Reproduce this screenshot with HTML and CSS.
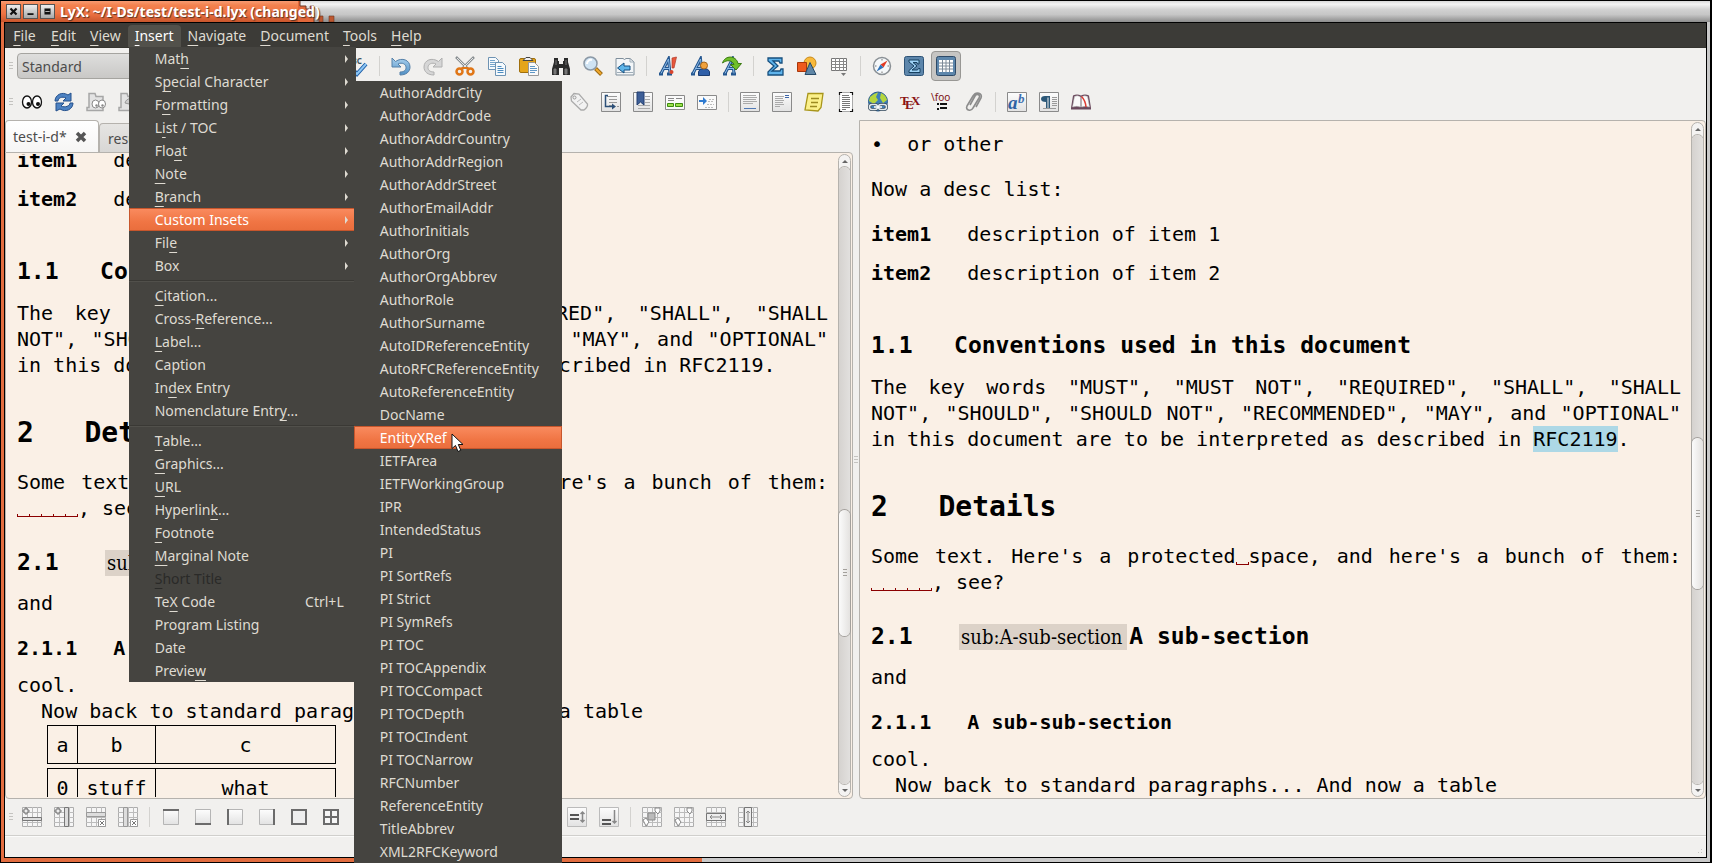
FILE: index.html
```html
<!DOCTYPE html>
<html lang="en">
<head>
<meta charset="utf-8">
<title>LyX: ~/I-Ds/test/test-i-d.lyx (changed)</title>
<link rel="stylesheet" href="styles.css">
</head>
<body>
<svg class="defs" aria-hidden="true">
  <defs>
    <linearGradient id="gBlue" x1="0" y1="0" x2="0" y2="1"><stop offset="0" stop-color="#a9d0ee"/><stop offset="1" stop-color="#4f8fc4"/></linearGradient>
    <linearGradient id="gPaper" x1="0" y1="0" x2="0" y2="1"><stop offset="0" stop-color="#fdfdfd"/><stop offset="1" stop-color="#e2e2e2"/></linearGradient>
    <symbol id="grid" viewBox="0 0 20 20"><path d="M.5.5h19v19H.5z" fill="#f6f6f6" stroke="#adadad"/><path d="M5.5 0v20M10.5 0v20M15.5 0v20M0 5.500h20M0 10.500h20M0 15.500h20" stroke="#bcbcbc" fill="none"/></symbol>
    <symbol id="plus" viewBox="0 0 8 8"><path d="M3 1h2v2h2v2H5v2H3V5H1V3h2z" fill="#eee" stroke="#777"/></symbol>
    <symbol id="cross" viewBox="0 0 8 8"><path d="M.5.5h7v7h-7z" fill="#fff" stroke="#999"/><path d="M2 2l4 4M6 2L2 6" stroke="#777"/></symbol>
    <symbol id="letterA" viewBox="0 0 20 20"><path d="M1 18h4M9 18h5M3 17.500L10.500 3l1.500 14.500M5.500 12.500h6.500" fill="none" stroke="#24568f" stroke-width="3"/><path d="M3 17.500L10.500 3l1.500 14.500M5.500 12.500h6.500" fill="none" stroke="#8ab9e6" stroke-width="1"/></symbol>
    <symbol id="curl" viewBox="0 0 20 20"><path d="M1 2v9h9L7 8c4-2 8 0 8 3.500S12 16 9 16v3c6 0 10-3 10-8C19 4 11 1 4.500 5.500z"/></symbol>
    <symbol id="sheet" viewBox="0 0 20 20"><path d="M.5.500h19v19H.5z" fill="url(#gPaper)" stroke="#8a8a8a"/></symbol>
    <symbol id="cell" viewBox="0 0 16 16"><path d="M.5.500h15v15H.5z" fill="url(#gPaper)" stroke="#b5b5b5"/></symbol>
  </defs>
</svg>

<div class="window">
  <header class="titlebar">
    <div class="titlebar__active">
      <button class="wm" aria-label="Close window"><svg viewBox="0 0 15 15"><path d="M4 4l7 7M11 4l-7 7" stroke="#111" stroke-width="2.500"/></svg></button>
      <button class="wm" aria-label="Minimize window"><svg viewBox="0 0 15 15"><path d="M4 10.500h7" stroke="#111" stroke-width="2"/></svg></button>
      <button class="wm" aria-label="Maximize window"><svg viewBox="0 0 15 15"><path d="M4 4h7v7H4z" fill="#111"/><path d="M5 7.500h5" stroke="#ccc" stroke-width="1"/></svg></button>
      <h1 class="titlebar__text">LyX: ~/I-Ds/test/test-i-d.lyx (changed)</h1>
    </div>
    <svg class="titlebar__edge" viewBox="0 0 38 21" aria-hidden="true"><path d="M0 0h2v5h6v3h3v4h5v9H0z" fill="#e2683a"/><path d="M2 0v5h6v3h3v4h5v9" fill="none" stroke="#6b3a26"/><path d="M12 5h4v3h-4zM21 15h4v6h-4zM31 15h5v6h-5z" fill="#bd5730" stroke="#6b3a26" stroke-width=".6"/></svg>
  </header>

  <div class="client">
    <nav class="menubar" aria-label="Main menu">
      <div class="menubar__item"><button><u>F</u>ile</button></div>
      <div class="menubar__item"><button><u>E</u>dit</button></div>
      <div class="menubar__item"><button><u>V</u>iew</button></div>
      <div class="menubar__item menubar__item--open">
        <button aria-haspopup="true" aria-expanded="true"><u>I</u>nsert</button>
        <div class="menu" role="menu">
          <button class="menu__row menu__row--more" role="menuitem">Mat<u>h</u></button>
          <button class="menu__row menu__row--more" role="menuitem">S<u>p</u>ecial Character</button>
          <button class="menu__row menu__row--more" role="menuitem">F<u>o</u>rmatting</button>
          <button class="menu__row menu__row--more" role="menuitem">L<u>i</u>st / TOC</button>
          <button class="menu__row menu__row--more" role="menuitem">Flo<u>a</u>t</button>
          <button class="menu__row menu__row--more" role="menuitem"><u>N</u>ote</button>
          <button class="menu__row menu__row--more" role="menuitem"><u>B</u>ranch</button>
          <button class="menu__row menu__row--more menu__row--active" role="menuitem">Custom Insets</button>
          <button class="menu__row menu__row--more" role="menuitem">Fil<u>e</u></button>
          <button class="menu__row menu__row--more" role="menuitem">Box</button>
          <hr class="menu__rule">
          <button class="menu__row" role="menuitem"><u>C</u>itation...</button>
          <button class="menu__row" role="menuitem">Cross-<u>R</u>eference...</button>
          <button class="menu__row" role="menuitem"><u>L</u>abel...</button>
          <button class="menu__row" role="menuitem">Caption</button>
          <button class="menu__row" role="menuitem">In<u>d</u>ex Entry</button>
          <button class="menu__row" role="menuitem">Nomenclature Entr<u>y</u>...</button>
          <hr class="menu__rule">
          <button class="menu__row" role="menuitem"><u>T</u>able...</button>
          <button class="menu__row" role="menuitem"><u>G</u>raphics...</button>
          <button class="menu__row" role="menuitem"><u>U</u>RL</button>
          <button class="menu__row" role="menuitem">Hyperlin<u>k</u>...</button>
          <button class="menu__row" role="menuitem"><u>F</u>ootnote</button>
          <button class="menu__row" role="menuitem"><u>M</u>arginal Note</button>
          <button class="menu__row" role="menuitem" disabled><u>S</u>hort Title</button>
          <button class="menu__row" role="menuitem">Te<u>X</u> Code<kbd>Ctrl+L</kbd></button>
          <button class="menu__row" role="menuitem">Program Listing</button>
          <button class="menu__row" role="menuitem">Date</button>
          <button class="menu__row" role="menuitem">Previe<u>w</u></button>
          <div class="menu menu--sub" role="menu">
            <button class="menu__row" role="menuitem">AuthorAddrCity</button>
            <button class="menu__row" role="menuitem">AuthorAddrCode</button>
            <button class="menu__row" role="menuitem">AuthorAddrCountry</button>
            <button class="menu__row" role="menuitem">AuthorAddrRegion</button>
            <button class="menu__row" role="menuitem">AuthorAddrStreet</button>
            <button class="menu__row" role="menuitem">AuthorEmailAddr</button>
            <button class="menu__row" role="menuitem">AuthorInitials</button>
            <button class="menu__row" role="menuitem">AuthorOrg</button>
            <button class="menu__row" role="menuitem">AuthorOrgAbbrev</button>
            <button class="menu__row" role="menuitem">AuthorRole</button>
            <button class="menu__row" role="menuitem">AuthorSurname</button>
            <button class="menu__row" role="menuitem">AutoIDReferenceEntity</button>
            <button class="menu__row" role="menuitem">AutoRFCReferenceEntity</button>
            <button class="menu__row" role="menuitem">AutoReferenceEntity</button>
            <button class="menu__row" role="menuitem">DocName</button>
            <button class="menu__row menu__row--active" role="menuitem">EntityXRef<svg class="pointer" viewBox="0 0 14 20" aria-hidden="true"><path d="M1 1v14.500l3.500-3L7 18.500l2.800-1.200L7.300 11.500H12z" fill="#fff" stroke="#111"/></svg></button>
            <button class="menu__row" role="menuitem">IETFArea</button>
            <button class="menu__row" role="menuitem">IETFWorkingGroup</button>
            <button class="menu__row" role="menuitem">IPR</button>
            <button class="menu__row" role="menuitem">IntendedStatus</button>
            <button class="menu__row" role="menuitem">PI</button>
            <button class="menu__row" role="menuitem">PI SortRefs</button>
            <button class="menu__row" role="menuitem">PI Strict</button>
            <button class="menu__row" role="menuitem">PI SymRefs</button>
            <button class="menu__row" role="menuitem">PI TOC</button>
            <button class="menu__row" role="menuitem">PI TOCAppendix</button>
            <button class="menu__row" role="menuitem">PI TOCCompact</button>
            <button class="menu__row" role="menuitem">PI TOCDepth</button>
            <button class="menu__row" role="menuitem">PI TOCIndent</button>
            <button class="menu__row" role="menuitem">PI TOCNarrow</button>
            <button class="menu__row" role="menuitem">RFCNumber</button>
            <button class="menu__row" role="menuitem">ReferenceEntity</button>
            <button class="menu__row" role="menuitem">TitleAbbrev</button>
            <button class="menu__row" role="menuitem">XML2RFCKeyword</button>
          </div>
        </div>
      </div>
      <div class="menubar__item"><button><u>N</u>avigate</button></div>
      <div class="menubar__item"><button><u>D</u>ocument</button></div>
      <div class="menubar__item"><button><u>T</u>ools</button></div>
      <div class="menubar__item"><button><u>H</u>elp</button></div>
    </nav>

    <div class="toolbar" role="toolbar" aria-label="Standard">
      <span class="grip"></span>
      <select class="style-select" aria-label="Paragraph style"><option>Standard</option></select>
      <button class="tool" aria-label="Spellcheck"><svg viewBox="0 0 20 20"><text x="-2" y="8" class="t-abc">ABC</text><path d="M4 13l5 5 9-10" fill="none" stroke="#1f5fa8" stroke-width="4"/><path d="M4 13l5 5 9-10" fill="none" stroke="#8cc6f4" stroke-width="2"/></svg></button>
      <span class="divider"></span>
      <button class="tool" aria-label="Undo"><svg viewBox="0 0 20 20"><use href="#curl" fill="url(#gBlue)" stroke="#5580a8"/></svg></button>
      <button class="tool" aria-label="Redo"><svg viewBox="0 0 20 20"><g transform="matrix(-1 0 0 1 20 0)"><use href="#curl" fill="#d6d6d6" stroke="#b0b0b0"/></g></svg></button>
      <button class="tool" aria-label="Cut"><svg viewBox="0 0 20 20"><path d="M1 1l12 12M19 1L7 13" stroke="#8a8f92" stroke-width="2.500"/><path d="M2 2l10 10M18 2L8 12" stroke="#e4e6e6"/><path d="M7 11h6l2 2H5z" fill="#e07616"/><circle cx="4.500" cy="15.500" r="3" fill="none" stroke="#e07616" stroke-width="2.500"/><circle cx="15.500" cy="15.500" r="3" fill="none" stroke="#e07616" stroke-width="2.500"/></svg></button>
      <button class="tool" aria-label="Copy"><svg viewBox="0 0 20 20"><path d="M1.500 1.500h7l3 3v9h-10z" fill="#f6fafd" stroke="#6e93b3"/><path d="M3 4.500h5M3 6.500h7M3 8.500h6M3 10.500h6" stroke="#76a5cc"/><path d="M8.500 6.500h7l3 3v10h-10z" fill="#f6fafd" stroke="#6e93b3"/><path d="M10.500 10.500h4M10.500 12.500h6M10.500 14.500h6M10.500 16.500h6" stroke="#4c8cc0"/></svg></button>
      <button class="tool" aria-label="Paste"><svg viewBox="0 0 20 20"><rect x=".5" y="2.500" width="16" height="14" rx="1.500" fill="#e5a51b" stroke="#a06f0c"/><path d="M4 4.500l3-3h4l3 3z" fill="#eee" stroke="#444"/><path d="M9.500 6.500h6l4 4v9h-10z" fill="#fafafa" stroke="#999"/><path d="M11 10.500h5M11 12.500h7M11 14.500h7M11 16.500h5" stroke="#5f97c6"/></svg></button>
      <button class="tool" aria-label="Find and replace"><svg viewBox="0 0 20 20"><path d="M3 2h4v3h1v3h4V5h1V2h4v4l2 7v6h-7v-7H8v7H1v-6l2-7z" fill="#2b2b2b"/><path d="M3 13h2v5H3zM14 13h2v5h-2zM5 4v5M15 4v5" fill="#777" stroke="#777"/></svg></button>
      <button class="tool" aria-label="Find"><svg viewBox="0 0 20 20"><path d="M12.500 12.500l6 6" stroke="#9c6a14" stroke-width="4"/><path d="M13 13l5 5" stroke="#f2a92c" stroke-width="2"/><circle cx="7.500" cy="7.500" r="6.500" fill="#cfe3f3" stroke="#8b98a5" stroke-width="1.500"/><path d="M4 8a4 4 0 0 1 5-4" fill="none" stroke="#fff" stroke-width="2"/></svg></button>
      <button class="tool" aria-label="Navigate back"><svg viewBox="0 0 20 20"><path d="M1 2.500h7l1.500 1 1.500-1h4l4 3.500v13H1z" fill="#f3f6f8" stroke="#7f8e9b"/><path d="M2 16.500h16M15 2.500V6h4" fill="none" stroke="#9fadb8"/><path d="M9 7l-6.500 5L9 17v-3h6v-4H9z" fill="#5db5ea" stroke="#174f80"/></svg></button>
      <span class="divider"></span>
      <button class="tool" aria-label="Toggle emphasis"><svg viewBox="0 0 20 20"><use href="#letterA" width="20" height="20"/><path d="M14 2l4.500-1-2.500 11h-2z" fill="#e8573c" stroke="#b23a28" stroke-width=".7"/><circle cx="13.500" cy="16" r="2" fill="#d9442c"/></svg></button>
      <button class="tool" aria-label="Toggle noun"><svg viewBox="0 0 20 20"><use href="#letterA" width="20" height="20"/><path d="M8.500 19.500v-4q1-3 5.500-3t5.500 3v4z" fill="#2f5fa8" stroke="#1c3d70"/><circle cx="14" cy="9.500" r="3.500" fill="#f0a13c" stroke="#a5641a"/></svg></button>
      <button class="tool" aria-label="Apply last text style"><svg viewBox="0 0 20 20"><use href="#letterA" width="20" height="20"/><path d="M.5 7C3-1 14-1 16 7.500h3.500L14 14 8.500 8.500H12C10 4 5 3.500.5 7z" fill="#6fbf2a" stroke="#3b7a12"/></svg></button>
      <span class="divider"></span>
      <button class="tool" aria-label="Insert math"><svg viewBox="0 0 20 20"><path d="M3 2h14v5h-2l-1-2H8l5 5-6 5h8l1-2h2v6H3v-3l6-6-6-5z" fill="#5fb4ec" stroke="#174f7e" stroke-width="1.300"/></svg></button>
      <button class="tool" aria-label="Insert graphics"><svg viewBox="0 0 20 20"><circle cx="13" cy="7" r="6" fill="#f8b93a" stroke="#c98a18"/><path d="M.5 6.500h9v9h-9z" fill="#ee5a1e" stroke="#a8360a"/><path d="M13 6.500l6 12H8z" fill="#5f86a6" stroke="#274a68"/></svg></button>
      <button class="tool" aria-label="Insert table"><svg viewBox="0 0 20 20"><path d="M2.500 2.500h15v12h-15z" fill="#fff" stroke="#777"/><path d="M6.500 2v13M10.500 2v13M14.500 2v13M2 5.500h16M2 8.500h16M2 11.500h16" stroke="#888"/><path d="M12 17h5l-2.500 3z" fill="#777"/></svg></button>
      <span class="divider"></span>
      <button class="tool" aria-label="Toggle outline"><svg viewBox="0 0 20 20"><circle cx="10" cy="10" r="8.500" fill="#f5f8fa" stroke="#8a9095" stroke-width="1.500"/><path d="M10 3v1.500M10 15.500V17M3 10h1.500M15.500 10H17" stroke="#777"/><path d="M15.500 4.500L8.500 8.500l3 3z" fill="#e23a24"/><path d="M4.500 15.500l4-7 3 3z" fill="#2d72bb"/></svg></button>
      <button class="tool" aria-label="Toggle math toolbar"><svg viewBox="0 0 20 20"><rect x=".5" y=".5" width="19" height="19" rx="2" fill="#5d86ab" stroke="#2e5376"/><path d="M5 4h10v4h-1.500l-.5-1.500H9l4 3.500-5 4h5.500l1-1.500H16v4H5v-2l5-4.500-5-4z" fill="#9fd3f6" stroke="#16405f"/></svg></button>
      <button class="tool tool--on" aria-label="Toggle table toolbar" aria-pressed="true"><svg viewBox="0 0 20 20"><rect x=".5" y=".5" width="19" height="19" rx="2" fill="#5d86ab" stroke="#2e4a68"/><path d="M3 4h14v12H3z" fill="#fff"/><path d="M6.500 4v12M10 4v12M13.500 4v12M3 7h14M3 10h14M3 13h14" stroke="#7c8a98"/></svg></button>
    </div>

    <div class="toolbar" role="toolbar" aria-label="View and insert">
      <span class="grip"></span>
      <div class="tool-group tool-group--first">
        <button class="tool" aria-label="View"><svg viewBox="0 0 20 20"><ellipse cx="5" cy="10" rx="4.500" ry="6" fill="#fff" stroke="#111" stroke-width="1.300"/><ellipse cx="15" cy="10" rx="4.500" ry="6" fill="#fff" stroke="#111" stroke-width="1.300"/><circle cx="6.500" cy="12" r="2" fill="#111"/><circle cx="16" cy="12" r="2" fill="#111"/></svg></button>
        <button class="tool" aria-label="Update"><svg viewBox="0 0 20 20"><path d="M1 9C1 3 8-1 14 3l3-2v8H9l3-3C8 4 4 6 4 9zM19 11c0 6-7 10-13 6l-4 2v-8h8l-3 3c4 2 9 0 9-3z" fill="#4d82c2" stroke="#24508c"/></svg></button>
        <button class="tool" aria-label="View master document"><svg viewBox="0 0 20 20"><path d="M3 1.500h6l1 3h7v14H1v-3h2z" fill="#e3e3e3" stroke="#a6a6a6" stroke-width="1.500"/><ellipse cx="9.500" cy="12" rx="3.500" ry="4" fill="#fff" stroke="#888"/><ellipse cx="16" cy="12" rx="3.500" ry="4" fill="#fff" stroke="#888"/><circle cx="10.500" cy="13.500" r="1.200" fill="#888"/><circle cx="16.500" cy="13.500" r="1.200" fill="#888"/></svg></button>
        <button class="tool" aria-label="Update master document"><svg viewBox="0 0 20 20"><path d="M3 1.500h6l1 3h7v14H1v-3h2z" fill="#e3e3e3" stroke="#a6a6a6" stroke-width="1.500"/><path d="M7 11c1-5 8-6 10-2l2-1v5h-5l2-2c-2-2-5-1-5 1z" fill="#ccc" stroke="#999"/></svg></button>
      </div>
      <div class="tool-group tool-group--insets">
        <button class="tool" aria-label="Insert label"><svg viewBox="0 0 20 20"><path d="M2 5l3-3.500 5 .5 8.500 10q.5 3-3.500 6h-3L2.500 9z" fill="#f2f2f2" stroke="#aaa" stroke-width="1.300"/><circle cx="5.500" cy="5.500" r="1.500" fill="none" stroke="#999"/><path d="M8 10l4-3M10 13l4-3" stroke="#bbb"/></svg></button>
        <button class="tool" aria-label="Insert cross-reference"><svg viewBox="0 0 20 20"><use href="#sheet"/><path d="M6 4.500h10M8 7.500h8M8 10.500h8M8 13.500h3M16 14.500h2" stroke="#999"/><path d="M7 3.500H4.500v11H12" fill="none" stroke="#2b4f78" stroke-width="1.500"/><path d="M11 11.500v6l4-3z" fill="#2b4f78"/></svg></button>
        <button class="tool" aria-label="Insert citation"><svg viewBox="0 0 20 20"><use href="#sheet"/><path d="M12 4.500h5M12 7.500h5M12 10.500h5M5 13.500h12M5 16.500h12" stroke="#aaa"/><path d="M4 0h7v13l-3.500-3L4 13z" fill="#3e5f97" stroke="#233f70"/></svg></button>
        <button class="tool" aria-label="Insert index entry"><svg viewBox="0 0 20 20"><path d="M.5 3.500h19v14H.5z" fill="#fafafa" stroke="#8a8a8a"/><path d="M3 6.500h6M11 6.500h6M3 8.500h6" stroke="#888"/><path d="M2.500 11.500h6v3h-6zM10.500 11.500h7v3h-7z" fill="#9ce04a" stroke="#3c8b10"/></svg></button>
        <button class="tool" aria-label="Insert nomenclature entry"><svg viewBox="0 0 20 20"><path d="M.5 3.500h19v14H.5z" fill="#fafafa" stroke="#8a8a8a"/><path d="M12 7.500h5M11 9.500h5M10 12.500h7M8 15.500h9" stroke="#bbb" stroke-dasharray="2 1"/><path d="M2 8h4V5l4 4-4 4v-3H2z" fill="#2f7bd0"/></svg></button>
        <span class="divider"></span>
        <button class="tool" aria-label="Insert footnote"><svg viewBox="0 0 20 20"><use href="#sheet"/><path d="M3 3.500h13M3 5.500h14M3 7.500h13M3 9.500h14M3 11.500h10" stroke="#aaa"/><path d="M4 16.500h12" stroke="#4f79b5"/></svg></button>
        <button class="tool" aria-label="Insert marginal note"><svg viewBox="0 0 20 20"><use href="#sheet"/><path d="M3 4.500h9M3 6.500h8M3 8.500h9M3 10.500h8M3 12.500h9M3 14.500h5" stroke="#aaa"/><path d="M13 3.500h4M13 5.500h4" stroke="#3e66a8"/></svg></button>
        <button class="tool" aria-label="Insert note"><svg viewBox="0 0 20 20"><path d="M4 1.500h15l-2 14-3 3.500L1 18z" fill="#fbf08a" stroke="#a8951a" stroke-width="1.300"/><path d="M7 6.500h8M7 10.500h7M6 14.500h7" stroke="#9c8a20" stroke-width="1.500"/></svg></button>
        <button class="tool" aria-label="Insert box"><svg viewBox="0 0 20 20"><path d="M3.500.5h13v19h-13z" fill="#fff" stroke="#aaa"/><path d="M3.500 3V.5H6M14 .5h2.500V3M3.500 17v2.500H6M14 19.500h2.500V17" fill="none" stroke="#111" stroke-width="1.200"/><path d="M6 3.500h7M6 5.500h8M6 7.500h8M6 9.500h8M6 11.500h8M6 13.500h8M6 15.500h8M6 17.500h4" stroke="#777"/></svg></button>
        <button class="tool" aria-label="Insert hyperlink"><svg viewBox="0 0 20 20"><circle cx="10" cy="9.500" r="9.500" fill="#3f7fb8" stroke="#285a8a"/><path d="M2 5q4-4 8-4.500l-2 4.500 2 3-4 4-5-3zM13 1q5 2 6 7l-4 3-3-5z" fill="#b5d63e"/><rect x="1.500" y="12.500" width="8" height="5" rx="2.500" fill="none" stroke="#33475a" stroke-width="3"/><rect x="10.500" y="12.500" width="8" height="5" rx="2.500" fill="none" stroke="#33475a" stroke-width="3"/><rect x="1.500" y="12.500" width="8" height="5" rx="2.500" fill="none" stroke="#e3eaee" stroke-width="1.500"/><rect x="10.500" y="12.500" width="8" height="5" rx="2.500" fill="none" stroke="#e3eaee" stroke-width="1.500"/><path d="M6 15h8" stroke="#fff" stroke-width="1.500"/></svg></button>
        <button class="tool" aria-label="Insert TeX code"><svg viewBox="0 0 20 20"><text x="0" y="13" class="t-tex">T</text><text x="5" y="17" class="t-tex">E</text><text x="11" y="13" class="t-tex">X</text></svg></button>
        <button class="tool" aria-label="Insert math macro"><svg viewBox="0 0 20 20"><text x="-1" y="9" class="t-foo">\foo</text><path d="M5 11h2v2H5zM5 16h2v2H5zM8 11h7v2H8zM8 15h7v2H8z" fill="#111"/></svg></button>
        <button class="tool" aria-label="Insert file"><svg viewBox="0 0 20 20"><path d="M6 13l5-9c2-3 6-1 4 2l-6 10c-2 4-8 2-6-2l6-10c3-5 10-3 8 2l-5 9" fill="none" stroke="#8c8c8c" stroke-width="1.600"/></svg></button>
        <span class="divider"></span>
        <button class="tool" aria-label="Text style"><svg viewBox="0 0 20 20"><use href="#sheet"/><text x="1" y="17" class="t-ab">a</text><text x="11" y="11" class="t-b">b</text></svg></button>
        <button class="tool" aria-label="Paragraph settings"><svg viewBox="0 0 20 20"><use href="#sheet"/><path d="M13 5.500h5M13 7.500h5M13 9.500h5M13 11.500h5M13 13.500h5M4 16.500h13" stroke="#999"/><path d="M11 4v12H9.500V5.500h-1V16H7v-6Q2 10 2 7t4-3z" fill="#2c5878"/></svg></button>
        <button class="tool" aria-label="Thesaurus"><svg viewBox="0 0 20 20"><path d="M0 16L2 3.500q4-2 8 0 4-2 8 0l2 12.500v1.500H0z" fill="#6b4a5e"/><path d="M1.500 15L3.500 4.500q3-1.500 6 .5v10Q6 13.500 1.500 15zM10.500 15V5q3-2 6-.5L18.500 15Q14 13.500 10.500 15z" fill="#fafafa" stroke="#bbb" stroke-width=".5"/><path d="M10.500 4.500q4 4 4.500 10.500" fill="none" stroke="#e03c34" stroke-width="1.500"/></svg></button>
      </div>
    </div>

    <main class="workarea">
      <section class="left">
        <div class="tabs" role="tablist">
          <div class="tab tab--current"><button role="tab" aria-selected="true">test-i-d*</button><button class="tab__close" aria-label="Close tab"><svg viewBox="0 0 12 12"><path d="M2 2l8 8M10 2l-8 8" stroke="#555" stroke-width="3.500"/></svg></button></div>
          <div class="tab"><button role="tab" aria-selected="false">resume</button></div>
        </div>
        <div class="frame frame--tabbed">
          <article class="doc doc--scrolled">
            <p class="entry"><b>item1</b>description of item 1</p>
            <p class="entry"><b>item2</b>description of item 2</p>
            <h3 class="sub sub--first"><span class="num">1.1</span>Conventions used in this document</h3>
            <p class="lines"><span>The key words "MUST", "MUST NOT", "REQUIRED", "SHALL", "SHALL</span><span>NOT", "SHOULD", "SHOULD NOT", "RECOMMENDED", "MAY", and "OPTIONAL"</span>in this document are to be interpreted as described in RFC2119.</p>
            <h2 class="section"><span class="num">2</span>Details</h2>
            <p class="lines"><span>Some text. Here's a protected<i class="nb nb--end"></i>space, and here's a bunch of them:</span><i class="nb"></i><i class="nb"></i><i class="nb"></i><i class="nb"></i><i class="nb nb--end"></i>, see?</p>
            <h3 class="sub"><span class="num">2.1</span><span class="label">sub:A-sub-section</span>A sub-section</h3>
            <p>and</p>
            <h4 class="subsub"><span class="num">2.1.1</span>A sub-sub-section</h4>
            <p>cool.</p>
            <p class="indent">Now back to standard paragraphs... And now a table</p>
            <table class="grid">
              <tr><td>a</td><td>b</td><td>c</td></tr>
              <tr><td>0</td><td>stuff</td><td>what</td></tr>
            </table>
          </article>
          <div class="scroll scroll--left" role="scrollbar" aria-label="Scroll source pane" aria-valuenow="55">
            <span class="scroll__arrow scroll__arrow--up"></span>
            <div class="scroll__track"><span class="scroll__thumb"></span></div>
            <span class="scroll__arrow scroll__arrow--down"></span>
          </div>
        </div>
      </section>
      <span class="splitter"></span>
      <section class="right frame">
        <article class="doc">
          <p class="bullet"><span>•</span>or other</p>
          <p class="spaced">Now a desc list:</p>
          <p class="entry spaced"><b>item1</b>description of item 1</p>
          <p class="entry"><b>item2</b>description of item 2</p>
          <h3 class="sub sub--first"><span class="num">1.1</span>Conventions used in this document</h3>
          <p class="lines"><span>The key words "MUST", "MUST NOT", "REQUIRED", "SHALL", "SHALL</span><span>NOT", "SHOULD", "SHOULD NOT", "RECOMMENDED", "MAY", and "OPTIONAL"</span>in this document are to be interpreted as described in <mark>RFC2119</mark>.</p>
          <h2 class="section"><span class="num">2</span>Details</h2>
          <p class="lines"><span>Some text. Here's a protected<i class="nb nb--end"></i>space, and here's a bunch of them:</span><i class="nb"></i><i class="nb"></i><i class="nb"></i><i class="nb"></i><i class="nb nb--end"></i>, see?</p>
          <h3 class="sub"><span class="num">2.1</span><span class="label">sub:A-sub-section</span>A sub-section</h3>
          <p>and</p>
          <h4 class="subsub"><span class="num">2.1.1</span>A sub-sub-section</h4>
          <p>cool.</p>
          <p class="indent">Now back to standard paragraphs... And now a table</p>
        </article>
        <div class="scroll scroll--right" role="scrollbar" aria-label="Scroll second pane" aria-valuenow="50">
          <span class="scroll__arrow scroll__arrow--up"></span>
          <div class="scroll__track"><span class="scroll__thumb"></span></div>
          <span class="scroll__arrow scroll__arrow--down"></span>
        </div>
      </section>
    </main>

    <div class="toolbar toolbar--table" role="toolbar" aria-label="Table">
      <span class="grip"></span>
      <div class="tool-group tool-group--first">
        <button class="tool" aria-label="Add row"><svg viewBox="0 0 20 20"><use href="#grid"/><path d="M.5 10.500h19v3H.5z" fill="#ddd" stroke="#777"/><use href="#plus" width="8" height="8"/></svg></button>
        <button class="tool" aria-label="Add column"><svg viewBox="0 0 20 20"><use href="#grid"/><path d="M10.500.5h4v19h-4z" fill="#ddd" stroke="#777"/><use href="#plus" width="8" height="8"/></svg></button>
        <button class="tool" aria-label="Delete row"><svg viewBox="0 0 20 20"><use href="#grid"/><path d="M.5 5.500h19v4H.5z" fill="#ddd" stroke="#999"/><use href="#cross" x="12" y="12" width="8" height="8"/></svg></button>
        <button class="tool" aria-label="Delete column"><svg viewBox="0 0 20 20"><use href="#grid"/><path d="M5.500.5h4v19h-4z" fill="#ddd" stroke="#999"/><use href="#cross" x="12" y="12" width="8" height="8"/></svg></button>
        <span class="divider"></span>
        <button class="tool" aria-label="Set top line"><svg viewBox="-2 -2 20 20"><use href="#cell" width="16" height="16"/><path d="M0 1h16" stroke="#6b6b6b" stroke-width="2"/></svg></button>
        <button class="tool" aria-label="Set bottom line"><svg viewBox="-2 -2 20 20"><use href="#cell" width="16" height="16"/><path d="M0 15h16" stroke="#6b6b6b" stroke-width="2"/></svg></button>
        <button class="tool" aria-label="Set left line"><svg viewBox="-2 -2 20 20"><use href="#cell" width="16" height="16"/><path d="M1 0v16" stroke="#6b6b6b" stroke-width="2"/></svg></button>
        <button class="tool" aria-label="Set right line"><svg viewBox="-2 -2 20 20"><use href="#cell" width="16" height="16"/><path d="M15 0v16" stroke="#6b6b6b" stroke-width="2"/></svg></button>
        <button class="tool" aria-label="Set border lines"><svg viewBox="-2 -2 20 20"><path d="M1 1h14v14H1z" fill="#eee" stroke="#6b6b6b" stroke-width="2"/></svg></button>
        <button class="tool" aria-label="Set all lines"><svg viewBox="-2 -2 20 20"><path d="M1 1h14v14H1zM8 0v16M0 8h16" fill="#f6f6f6" stroke="#6b6b6b" stroke-width="2"/></svg></button>
      </div>
      <div class="tool-group tool-group--cells">
        <button class="tool" aria-label="Align middle"><svg viewBox="0 0 20 20"><path d="M.5.500h19v19H.5z" fill="url(#gPaper)" stroke="#bbb"/><path d="M3 8h9M3 12h9" stroke="#555" stroke-width="2"/><path d="M15.500 5v10M13.500 7l2-2 2 2M13.500 13l2 2 2-2" fill="none" stroke="#888" stroke-width="1.500"/></svg></button>
        <button class="tool" aria-label="Align bottom"><svg viewBox="0 0 20 20"><path d="M.5.500h19v19H.5z" fill="url(#gPaper)" stroke="#bbb"/><path d="M3 13h9M3 17h9" stroke="#555" stroke-width="2"/><path d="M15.500 3v13M13.500 14l2 2 2-2" fill="none" stroke="#888" stroke-width="1.500"/></svg></button>
        <span class="divider"></span>
        <button class="tool" aria-label="Rotate cell"><svg viewBox="0 0 20 20"><use href="#grid"/><path d="M6 6h7v7H6z" fill="#bbb" stroke="#888"/><path d="M1 13l3-2 3 4-3 4zM13 1h5v3l-2 3-3-3z" fill="#fff" stroke="#888"/></svg></button>
        <button class="tool" aria-label="Rotate table"><svg viewBox="0 0 20 20"><use href="#grid"/><path d="M1 13l3-2 3 4-3 4zM13 1h5v3l-2 3-3-3z" fill="#fff" stroke="#888"/></svg></button>
        <button class="tool" aria-label="Merge columns"><svg viewBox="0 0 20 20"><use href="#grid"/><path d="M.5 6.500h19v7H.5z" fill="#eee" stroke="#777"/><path d="M4 10h12M6 8l-2 2 2 2M14 8l2 2-2 2" fill="none" stroke="#888"/></svg></button>
        <button class="tool" aria-label="Merge rows"><svg viewBox="0 0 20 20"><use href="#grid"/><path d="M6.500.5h7v19h-7z" fill="#eee" stroke="#777"/><path d="M10 4v12M8 6l2-2 2 2M8 14l2 2 2-2" fill="none" stroke="#888"/></svg></button>
      </div>
    </div>
    <footer class="statusbar"><span class="resize"></span></footer>
  </div>
</div>
</body>
</html>
```
FILE: styles.css
```css
* { box-sizing: border-box; }

body {
  margin: 0;
  background: #000;
  font: 14px/23px "Noto Sans", "Open Sans", sans-serif;
  color: #4c4c4c;
  overflow: hidden;
}

button {
  font: inherit;
  color: inherit;
  background: none;
  border: 0;
  margin: 0;
  padding: 0;
}

h1, h2, h3, h4, p { margin: 0; font-size: inherit; }
svg { display: block; overflow: visible; }
.defs { position: absolute; width: 0; height: 0; }

u {
  text-decoration: underline 1px;
  text-underline-offset: 4px;
  text-decoration-skip-ink: none;
}

/* Window frame */
.window {
  height: 100vh;
  display: flex;
  flex-direction: column;
  background: linear-gradient(90deg, #e26d40 0 41%, #c9c9c9 41%);
  border: solid #000;
  border-width: 1px 2px 1px 1px;
}

.titlebar {
  display: flex;
  flex: none;
  height: 21px;
  background: linear-gradient(#d8d8d8, #f4f4f4 15%, #d2d2d2 40%, #c6c6c6 65%, #8c8c8c);
}

.titlebar__active {
  display: flex;
  align-items: center;
  gap: 2px;
  width: 297px;
  padding-left: 5px;
  background: linear-gradient(#f79b72, #f3824f 20%, #ee7343 60%, #c9562c);
}

.titlebar__text {
  margin-left: 3px;
  font-weight: 700;
  font-size: 14px;
  line-height: 20px;
  white-space: nowrap;
  color: #fff;
  text-shadow: 1px 1px 1px #5a3322;
  z-index: 1;
}

.titlebar__edge { width: 38px; height: 21px; }

.wm {
  width: 15px;
  height: 15px;
  background: linear-gradient(#eee, #a9a9a9);
  border: 1px solid #555;
}
.wm svg { width: 13px; height: 13px; }

.client {
  flex: 1;
  min-height: 0;
  display: flex;
  flex-direction: column;
  margin: 0 3px 4px;
  border: 1px solid #000;
  background: #f1f0ee;
}

/* Menus */
.menubar {
  display: flex;
  flex: none;
  height: 25px;
  background: #3c3b37;
  border-bottom: 1px solid #35342f;
  color: #dfdbd2;
}

.menubar__item { position: relative; padding-top: 2px; }
.menubar__item > button { min-width: 39px; height: 22px; padding: 0 7px; border-radius: 4px 4px 0 0; line-height: 20px; display: block; }
.menubar__item--open > button { background: #52514b; color: #fff; }

.menu {
  position: absolute;
  top: 24px;
  left: 1px;
  z-index: 5;
  width: 227px;
  background: #454440;
  color: #dfdbd2;
}

.menu--sub { top: 34px; left: 225px; width: 208px; }

.menu__row {
  position: relative;
  display: flex;
  white-space: pre;
  width: 100%;
  height: 23px;
  padding: 0 12px 0 26px;
  line-height: 23px;
  text-align: left;
}

.menu__row kbd { margin-left: auto; font: inherit; }
.menu__row:disabled { color: #2a2a28; }

.menu__row--active {
  color: #fff;
  background: linear-gradient(#fa8c60, #f07544 60%, #e96d3c);
  box-shadow: inset 0 0 0 1px #c7562c;
}

.menu__row--more::after {
  content: "";
  margin: auto -4px auto auto;
  border: 4px solid transparent;
  border-left: 3px solid #dfdbd2;
  border-right: 0;
}

.menu__rule {
  height: 7px;
  margin: 0;
  border: 0;
  background: linear-gradient(transparent 3px, #3a3935 3px 4px, #51504b 4px 5px, transparent 5px);
}

.pointer { position: absolute; left: 97px; top: 7px; width: 14px; height: 20px; }

/* Toolbars */
.toolbar {
  display: flex;
  flex: none;
  align-items: center;
  height: 36px;
  padding-left: 4px;
}
.toolbar--table { height: 37px; border-bottom: 1px solid #d0cfcc; }

.tool-group { display: flex; align-items: center; }
.tool-group--first { margin-left: 3px; }
.tool-group--insets { margin-left: 419px; }
.tool-group--cells { margin-left: 214px; }

.grip {
  width: 4px;
  height: 8px;
  background: repeating-linear-gradient(#c4c3c0 0 1px, transparent 1px 3px);
}

.tool {
  display: grid;
  place-items: center;
  flex: none;
  width: 32px;
  height: 32px;
}
.tool svg { width: 20px; height: 20px; }
.tool--on { width: 30px; height: 30px; margin: 0 1px; border: 1px solid #989794; border-radius: 4px; background: #c6c5c3; }

.divider { width: 1px; height: 20px; margin: 0 5px; background: #d3d2cf; }

.style-select {
  appearance: none;
  flex: none;
  width: 325px;
  height: 26px;
  margin-left: 4px;
  padding: 0 4px;
  font: inherit;
  color: #4c4c4c;
  border: 1px solid #a5a4a0;
  border-radius: 4px;
  background: linear-gradient(#dededd, #c9c8c6);
}

.t-abc { font: 700 8px "Noto Sans", sans-serif; fill: #3d5563; }
.t-tex { font: 700 13px "Liberation Serif", serif; fill: #8b1414; }
.t-foo { font: 10px "Noto Sans", sans-serif; fill: #7c1414; }
.t-ab { font: italic 700 19px "Liberation Serif", serif; fill: #2f62a3; }
.t-b { font: italic 700 13px "Liberation Serif", serif; fill: #3f6fb0; }

/* Work area */
.workarea {
  flex: 1;
  min-height: 0;
  display: flex;
}

.left {
  flex: 848 1 0;
  min-width: 0;
  display: flex;
  flex-direction: column;
}

.right { flex: 843 1 0; }

.frame {
  display: flex;
  min-width: 0;
  min-height: 0;
  padding: 1px;
  border: 1px solid #b5b2ad;
  border-radius: 0 4px 4px 4px;
  background: #faf0e6;
}
.frame--tabbed { flex: 1; }

.splitter {
  align-self: center;
  width: 4px;
  height: 8px;
  margin: 0 1px;
  background: repeating-linear-gradient(#c4c3c0 0 1px, transparent 1px 3px);
}

.tabs { display: flex; align-items: flex-end; flex: none; height: 32px; }

.tab {
  display: flex;
  align-items: center;
  gap: 8px;
  height: 29px;
  min-width: 120px;
  padding: 0 8px;
  border: 1px solid #b5b2ad;
  border-bottom: 0;
  border-radius: 4px 4px 0 0;
  background: linear-gradient(#e6e5e3, #d8d7d5);
}

.tab--current {
  height: 32px;
  min-width: 94px;
  padding: 0 7px;
  background: linear-gradient(#fff, #f6f5f4);
}
.tab__close svg { width: 12px; height: 12px; }

/* Document text */
.doc {
  flex: 1;
  min-width: 0;
  overflow: hidden;
  padding: 9px 10px 0 10px;
  font: 20px/26px "DejaVu Sans Mono", monospace;
  color: #000;
}

.doc--scrolled { padding-top: 0; }
.doc--scrolled > :first-child { margin-top: -7px; }
.doc p { white-space: nowrap; }

.spaced { margin-top: 19px; }
.entry + .entry { margin-top: 13px; }
.entry b, .num { margin-right: 3ch; }
.bullet span { margin-right: 2ch; }
.indent { margin-left: 2ch; }

.sub { margin: 26px 0 13px; font-size: 23px; line-height: 30px; white-space: nowrap; }
.sub--first { margin: 44px 0 14px; }
.section { margin: 38px 0 19px; font-size: 28px; line-height: 34px; }
.subsub { margin: 19px 0 11px; font-size: 20px; }

.lines span {
  display: block;
  white-space: normal;
  text-align-last: justify;
}

.doc mark { display: inline-block; background: #add8e6; color: inherit; }

.label {
  display: inline-block;
  margin: 0 2px 0 5px;
  padding: 0 5px 0 2px;
  font: 20px/26px "DejaVu Serif Condensed", "DejaVu Serif", serif;
  background: #dcd2c8;
}

.nb {
  display: inline-block;
  width: 12px;
  height: 3px;
  vertical-align: -2px;
  border: solid #8b0000;
  border-width: 0 0 1px 1px;
}
.nb--end { width: 13px; border-right-width: 1px; }

.grid {
  margin: -3px 0 0 30px;
  border-spacing: 0 4px;
}
.grid td {
  height: 39px;
  padding: 0 8px;
  border: 1px solid #000;
  border-right: 0;
  text-align: center;
}
.grid td:nth-child(1) { width: 30px; }
.grid td:nth-child(2) { width: 78px; }
.grid td:nth-child(3) { width: 181px; border-right: 1px solid #000; }

/* Scroll bars */
.scroll {
  display: flex;
  flex-direction: column;
  flex: none;
  width: 13px;
  border: 1px solid #b5b2ad;
  border-radius: 7px;
  background: #f4f3f2;
}

.scroll__arrow { flex: none; height: 12px; display: grid; place-items: center; }
.scroll__arrow::after { content: ""; border: 3px solid transparent; }
.scroll__arrow--up::after { border-top: 0; border-bottom-color: #666; }
.scroll__arrow--down::after { border-bottom: 0; border-top-color: #666; }

.scroll__track {
  flex: 1;
  display: flex;
  flex-direction: column;
  border-radius: 6px;
  background: linear-gradient(90deg, #d5d2cf, #e2e0de);
  box-shadow: 0 0 0 1px #b5b2ad;
}
.scroll__track::before, .scroll__track::after { content: ""; flex: 342 1 0; }
.scroll__track::after { flex-grow: 148; }
.scroll--right .scroll__track::before { flex-grow: 303; }
.scroll--right .scroll__track::after { flex-grow: 195; }

.scroll__thumb {
  flex: 126 1 0;
  display: grid;
  place-items: center;
  border-radius: 6px;
  background: linear-gradient(90deg, #fbfbfb, #e4e2e0);
  box-shadow: 0 0 0 1px #a3a09c;
}
.scroll--right .scroll__thumb { flex-grow: 150; }
.scroll__thumb::after {
  content: "";
  width: 4px;
  height: 8px;
  background: repeating-linear-gradient(#a3a09c 0 1px, transparent 1px 3px);
}

.statusbar {
  flex: none;
  display: flex;
  justify-content: flex-end;
  align-items: flex-end;
  height: 21px;
  padding: 2px;
  border-top: 1px solid #fbfbfa;
}
.resize {
  width: 10px;
  height: 10px;
  background: radial-gradient(circle, #c4c3c0 1px, transparent 1px) 0 0 / 3px 3px;
  clip-path: polygon(100% 0, 100% 100%, 0 100%);
}
```
